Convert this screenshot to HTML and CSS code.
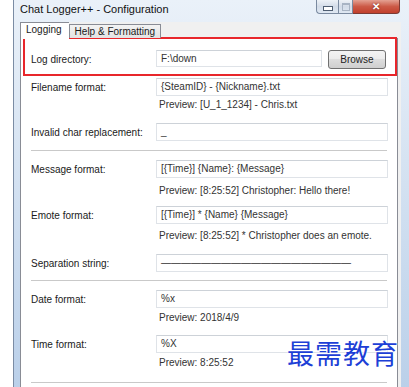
FILE: index.html
```html
<!DOCTYPE html>
<html lang="en">
<head>
    <meta charset="UTF-8">
    <meta name="viewport" content="width=device-width, initial-scale=1.0">
    <title>Chat Logger++ - Configuration</title>
    <link rel="stylesheet" href="styles.css">
</head>
<body>
    <div class="window">
        <div class="titlebar">
            <span class="title">Chat Logger++ - Configuration</span>
            <div class="caption-buttons">
                <div class="cap-btn cap-min"><span class="min-glyph"></span></div>
                <div class="cap-btn cap-max"><span class="max-glyph"></span></div>
                <div class="cap-btn cap-close">&#x2715;</div>
            </div>
        </div>
        <div class="client">
            <div class="tabs">
                <div class="tab active">Logging</div>
                <div class="tab">Help &amp; Formatting</div>
            </div>
            <div class="page">
                <!-- Log directory -->
                <div class="row row-log">
                    <label class="label">Log directory:</label>
                    <div class="field with-button">
                        <div class="textbox">F:\down</div>
                        <button class="browse">Browse</button>
                    </div>
                </div>

                <div class="row row-filename">
                    <label class="label">Filename format:</label>
                    <div class="field"><div class="textbox">{SteamID} - {Nickname}.txt</div></div>
                </div>
                <div class="preview pv-filename">Preview: [U_1_1234] - Chris.txt</div>

                <div class="row row-invalid">
                    <label class="label">Invalid char replacement:</label>
                    <div class="field"><div class="textbox">_</div></div>
                </div>

                <div class="separator sep-1"></div>

                <div class="row row-message">
                    <label class="label">Message format:</label>
                    <div class="field"><div class="textbox">[{Time}] {Name}: {Message}</div></div>
                </div>
                <div class="preview pv-message">Preview: [8:25:52] Christopher: Hello there!</div>

                <div class="row row-emote">
                    <label class="label">Emote format:</label>
                    <div class="field"><div class="textbox">[{Time}] * {Name} {Message}</div></div>
                </div>
                <div class="preview pv-emote">Preview: [8:25:52] * Christopher does an emote.</div>

                <div class="row row-separation">
                    <label class="label">Separation string:</label>
                    <div class="field"><div class="textbox">&#x2014;&#x2014;&#x2014;&#x2014;&#x2014;&#x2014;&#x2014;&#x2014;&#x2014;&#x2014;&#x2014;&#x2014;&#x2014;&#x2014;&#x2014;&#x2014;&#x2014;&#x2014;&#x2014;</div></div>
                </div>

                <div class="separator sep-2"></div>

                <div class="row row-date">
                    <label class="label">Date format:</label>
                    <div class="field"><div class="textbox">%x</div></div>
                </div>
                <div class="preview pv-date">Preview: 2018/4/9</div>

                <div class="row row-time">
                    <label class="label">Time format:</label>
                    <div class="field"><div class="textbox">%X</div></div>
                </div>
                <div class="preview pv-time">Preview: 8:25:52</div>

                <div class="separator sep-3"></div>
            </div>
        </div>
    </div>

    <!-- annotation drawn over the screenshot -->
    <div class="highlight"></div>
    <div class="watermark">最需教育</div>
</body>
</html>
```

FILE: styles.css
```css
html, body {
    margin: 0;
    padding: 0;
}
body {
    position: relative;
    width: 409px;
    height: 387px;
    overflow: hidden;
    background: #fff;
    font-family: "Liberation Sans", Arial, sans-serif;
    font-size: 10px;
    color: #1a1a1a;
}
.window {
    box-sizing: border-box;
    margin-left: 13px;
    width: 396px;
    height: 400px;
    padding: 0 8px 0 6px;
    border-left: 1px solid #7b8ca4;
    background: linear-gradient(to bottom, #eaf1f9 0%, #d6e3f2 40%, #b9cfe9 100%);
    display: flex;
    flex-direction: column;
}
.titlebar {
    height: 22px;
    display: flex;
    align-items: flex-start;
}
.title {
    font-size: 11px;
    color: #111;
    margin-top: 3px;
}
.caption-buttons {
    margin-left: auto;
    margin-right: 1px;
    display: flex;
    height: 14px;
}
.cap-btn {
    box-sizing: border-box;
    height: 14px;
    border: 1px solid #7a8aa0;
    border-top: none;
    display: flex;
    align-items: center;
    justify-content: center;
}
.cap-min {
    width: 22px;
    border-radius: 0 0 0 4px;
    border-right: none;
    background: linear-gradient(to bottom, #eef2f7, #d3dce8 50%, #dfe8f3);
}
.cap-max {
    width: 15px;
    background: linear-gradient(to bottom, #eef2f7, #d3dce8 50%, #dfe8f3);
}
.cap-close {
    width: 47px;
    border-left: none;
    border-radius: 0 0 4px 0;
    border-color: #7b3b35;
    background: linear-gradient(to bottom, #e4a193, #cc5a47 50%, #c2402d);
    color: #fff;
    font-size: 10px;
    font-weight: bold;
    text-shadow: 0 0 2px #6d1e12;
}
.min-glyph {
    width: 8px;
    height: 3px;
    margin-top: 3px;
    border: 1px solid #4f5e72;
    background: #fff;
}
.max-glyph {
    width: 6px;
    height: 5px;
    border: 1px solid #a8b4c4;
    border-top-width: 2px;
}
.client {
    flex: 1;
    background: #f0f0f0;
    padding-right: 3px;
    display: flex;
    flex-direction: column;
}
.tabs {
    height: 16px;
    display: flex;
    align-items: flex-end;
    position: relative;
    z-index: 1;
}
.tab {
    box-sizing: border-box;
    height: 14px;
    padding: 0 5px;
    border: 1px solid #898c95;
    border-bottom: none;
    background: linear-gradient(to bottom, #f3f3f3, #e3e3e3);
    line-height: 14px;
    font-size: 10px;
}
.tab.active {
    height: 17px;
    margin-bottom: -1px;
    padding: 0 7px 0 5px;
    background: #fff;
    line-height: 14px;
    border-right: none;
}
.page {
    flex: 1;
    border: 1px solid #898c95;
    background: #fff;
    padding: 11px 9px 0 10px;
}
.row {
    display: flex;
    align-items: center;
    height: 18px;
}
.row-log {
    height: 19px;
}
.label {
    width: 125px;
    flex-shrink: 0;
}
.field {
    flex: 1;
    display: flex;
    gap: 6px;
}
.textbox {
    box-sizing: border-box;
    flex: 1;
    height: 18px;
    padding-left: 4px;
    line-height: 16px;
    border: 1px solid #dfe3e8;
    border-top-color: #cdd2d8;
    color: #333;
    white-space: nowrap;
    overflow: hidden;
}
.with-button .textbox {
    flex: none;
    width: 166px;
    height: 17px;
}
.browse {
    box-sizing: border-box;
    width: 58px;
    height: 19px;
    margin-right: 2px;
    border: 1px solid #707070;
    border-radius: 3px;
    background: linear-gradient(to bottom, #f3f3f3 0%, #ebebeb 49%, #dddddd 50%, #cfcfcf 100%);
    font-family: inherit;
    font-size: 10px;
    color: #222;
    padding: 0;
}
.preview {
    margin-left: 128px;
    height: 14px;
    line-height: 14px;
    color: #333;
}
.separator {
    height: 1px;
    margin-right: 1px;
    background: #c9c9c9;
}
.row-filename { margin-top: 9px; }
.pv-filename { margin-top: 2px; }
.row-invalid { margin-top: 11px; }
.sep-1 { margin-top: 9px; }
.row-message { margin-top: 9px; }
.pv-message { margin-top: 6px; }
.row-emote { margin-top: 8px; }
.pv-emote { margin-top: 5px; }
.row-separation { margin-top: 11px; }
.sep-2 { margin-top: 8px; }
.row-date { margin-top: 9px; }
.pv-date { margin-top: 3px; }
.row-time { margin-top: 10px; }
.pv-time { margin-top: 3px; }
.sep-3 { margin-top: 12px; }

.highlight {
    position: absolute;
    left: 23px;
    top: 37px;
    width: 370px;
    height: 35px;
    border: 2px solid #e8262b;
}
.watermark {
    position: absolute;
    left: 287px;
    top: 333px;
    font-family: "Noto Sans CJK SC", sans-serif;
    font-size: 27px;
    line-height: 40px;
    letter-spacing: 1px;
    color: #1d3fd6;
    text-shadow: 0 0 2px #fff, 0 0 2px #fff;
}
```
